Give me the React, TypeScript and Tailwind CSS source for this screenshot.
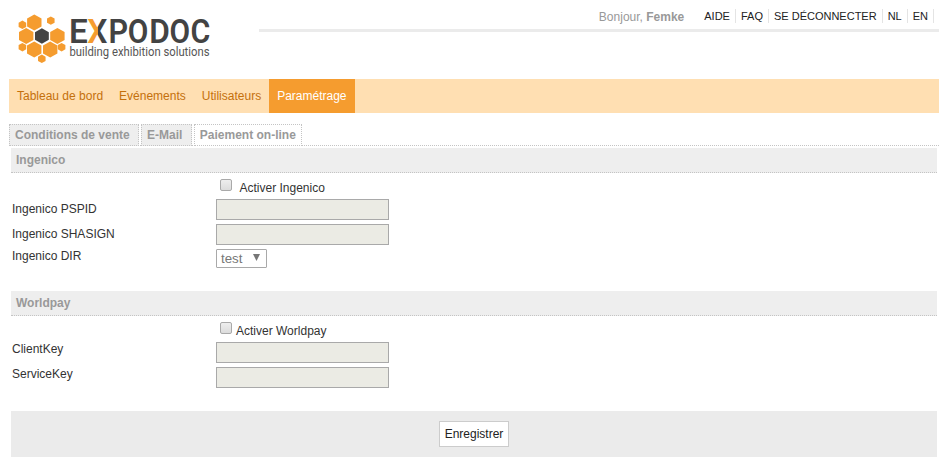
import { useState } from "react";
import type { ReactNode } from "react";
import clsx from "clsx";

const menuItems = ["Tableau de bord", "Evénements", "Utilisateurs", "Paramétrage"];
const tabs = ["Conditions de vente", "E-Mail", "Paiement on-line"];
const topLinks = ["AIDE", "FAQ", "SE DÉCONNECTER", "NL", "EN"];

// cx, cy, radius
const cells = [
  [34.3, 22.6, 8],
  [26.2, 36, 8],
  [57.4, 36, 8],
  [34.2, 49.4, 8],
  [50.2, 49.4, 8],
  [22.4, 24.8, 4.2],
  [50.8, 20.6, 4.2],
  [22.4, 47.2, 4.2],
  [61.6, 47.2, 4.2],
  [41.8, 58.8, 4.2],
];

const hexagon = (cx: number, cy: number, r: number) => {
  const w = r * 0.9;
  const h = r / 2;
  return `${cx},${cy - r} ${cx + w},${cy - h} ${cx + w},${cy + h} ${cx},${cy + r} ${cx - w},${cy + h} ${cx - w},${cy - h}`;
};

const letters = [
  { char: "E", x: 69, width: 18.8, fill: "#434343" },
  { char: "X", x: 87.2, width: 20.2, fill: "url(#logo-x)" },
  { char: "P", x: 108.6, width: 19.6, fill: "#434343" },
  { char: "O", x: 127.8, width: 20.6, fill: "#434343" },
  { char: "D", x: 149.2, width: 20.6, fill: "#434343" },
  { char: "O", x: 169.6, width: 20.6, fill: "#434343" },
  { char: "C", x: 190.6, width: 19.8, fill: "#434343" },
];

function Logo() {
  return (
    <svg width="220" height="70" viewBox="0 0 220 70" className="block shrink-0">
      <defs>
        <linearGradient id="logo-x">
          <stop offset="0.5" stopColor="#f59c2f" />
          <stop offset="0.5" stopColor="#434343" />
        </linearGradient>
      </defs>
      {cells.map(([cx, cy, r]) => (
        <polygon key={`${cx}-${cy}`} points={hexagon(cx, cy, r)} fill="#f59c2f" />
      ))}
      <polygon points={hexagon(41.9, 36, 7.7)} fill="#434343" />
      {letters.map((letter) => (
        <text
          key={letter.x}
          x={letter.x}
          y="42.6"
          fill={letter.fill}
          textLength={letter.width}
          lengthAdjust="spacingAndGlyphs"
          className="font-['Roboto',sans-serif] text-[34px] font-semibold"
        >
          {letter.char}
        </text>
      ))}
      <text
        x="69.5"
        y="56"
        fill="#555555"
        textLength="140"
        lengthAdjust="spacingAndGlyphs"
        className="font-['Roboto',sans-serif] text-[12px]"
      >
        building exhibition solutions
      </text>
    </svg>
  );
}

function SectionTitle({ children }: { children: ReactNode }) {
  return (
    <h2 className="h-[25px] border-b border-dotted border-[#c4c4c4] bg-[#eeeeee] pl-[5px] text-[12px] leading-[25px] font-bold text-[#999999]">
      {children}
    </h2>
  );
}

function Checkbox({ label, className }: { label: string; className?: string }) {
  const [checked, setChecked] = useState(false);

  return (
    <label className="ml-[209px] flex h-[26px] items-start pt-[6px]">
      <input
        type="checkbox"
        checked={checked}
        onChange={() => setChecked(!checked)}
        className="h-[12px] w-[12px] appearance-none rounded-[2px] border border-[#a9a9a9] bg-linear-to-b from-[#eeeeee] to-[#dcdcdc] checked:bg-[#777777]"
      />
      <span className={clsx("mt-[2px] leading-[14px]", className)}>{label}</span>
    </label>
  );
}

function TextField({ label, labelClass = "pt-[3px]" }: { label: string; labelClass?: string }) {
  return (
    <label className="flex h-[25px] items-start">
      <span className={clsx("w-[205px] pl-[1px] leading-[14px]", labelClass)}>{label}</span>
      <input
        type="text"
        className="h-[21px] w-[173px] border border-[#a9a9a9] bg-[#ebebe4] px-1 outline-none"
      />
    </label>
  );
}

export default function App() {
  const [activeTab, setActiveTab] = useState("Paiement on-line");

  return (
    <div className="h-[458px] w-[944px] overflow-hidden bg-white font-['Liberation_Sans',Arial,sans-serif] text-[12px] text-[#333333]">
      <header className="flex h-[79px]">
        <Logo />
        <div className="ml-[39px] flex h-[32px] w-[680px] items-start justify-end border-b-[3px] border-[#ebebeb] pt-[9px]">
          <p className="mr-[20px] leading-[16px] text-[#999999]">
            Bonjour, <b>Femke</b>
          </p>
          <ul className="mr-[5px] flex text-[11px] leading-[14px] text-[#222222]">
            {topLinks.map((link) => (
              <li
                key={link}
                className="mr-[5px] flex h-[14px] items-center border-r border-[#e4e4e4] pr-[5px] last:mr-0"
              >
                <a href="#">{link}</a>
              </li>
            ))}
          </ul>
        </div>
      </header>

      <nav className="ml-[9px] flex h-[34px] w-[930px] bg-[#ffdfb2] leading-[34px] text-[#c4700c]">
        {menuItems.map((item) => (
          <a
            key={item}
            href="#"
            className={clsx("px-[8px]", item === "Paramétrage" && "bg-[#f59c2f] text-white")}
          >
            {item}
          </a>
        ))}
      </nav>

      <div className="ml-[9px] mt-[11px] flex h-[22px] w-[930px] gap-[2px] border-b border-dotted border-[#c4c4c4]">
        {tabs.map((tab) => (
          <button
            key={tab}
            onClick={() => setActiveTab(tab)}
            className={clsx(
              "h-[22px] border border-dotted border-[#c4c4c4] font-bold leading-[19px] text-[#999999]",
              tab === activeTab ? "bg-white px-[5px]" : "bg-[#eeeeee] pl-[5px] pr-[8.4px]"
            )}
          >
            {tab}
          </button>
        ))}
      </div>

      <main className="ml-[11px] mt-[2px] w-[926px]">
        <SectionTitle>Ingenico</SectionTitle>
        <Checkbox label="Activer Ingenico" className="ml-[7.5px]" />
        <TextField label="Ingenico PSPID" />
        <TextField label="Ingenico SHASIGN" />
        <div className="flex h-[42px] items-start">
          <span className="w-[205px] pl-[1px] leading-[14px]">Ingenico DIR</span>
          <div className="flex h-[19px] w-[51px] items-center justify-between rounded-[1px] border border-[#a9a9a9] pl-[4px] pr-[6px] text-[13.3px] text-[#777777]">
            <span>test</span>
            <svg width="7" height="7" viewBox="0 0 7 7" className="mb-[2px]">
              <path d="M0 0h7L3.5 7z" fill="#777777" />
            </svg>
          </div>
        </div>

        <SectionTitle>Worldpay</SectionTitle>
        <Checkbox label="Activer Worldpay" className="ml-[4px]" />
        <TextField label="ClientKey" labelClass="pt-0" />
        <TextField label="ServiceKey" labelClass="pt-0" />

        <div className="mt-[19px] flex h-[46px] justify-center bg-[#ebebeb] pt-[10px]">
          <button className="h-[26px] w-[70px] border border-[#cccccc] bg-white leading-[24px] text-[#222222]">
            Enregistrer
          </button>
        </div>
      </main>
    </div>
  );
}
